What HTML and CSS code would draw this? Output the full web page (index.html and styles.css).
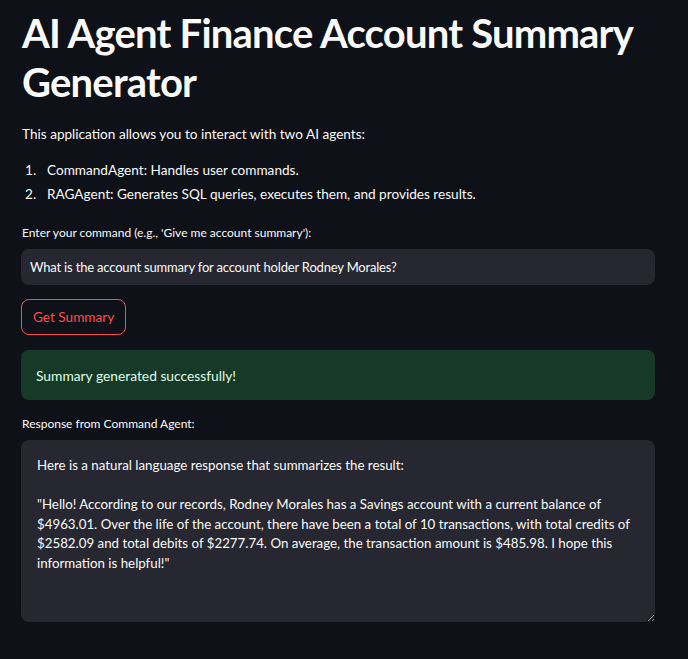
FILE: index.html
```html
<!DOCTYPE html>
<html lang="en">
<head>
<meta charset="utf-8">
<title>AI Agent Finance Account Summary Generator</title>
<link rel="stylesheet" href="styles.css">
</head>
<body>
<main class="app">
  <h1 class="title">AI Agent Finance Account Summary Generator</h1>
  <p class="intro">This application allows you to interact with two AI agents:</p>
  <ol class="agents">
    <li>CommandAgent: Handles user commands.</li>
    <li>RAGAgent: Generates SQL queries, executes them, and provides results.</li>
  </ol>
  <label class="field-label" for="cmd">Enter your command (e.g., 'Give me account summary'):</label>
  <input id="cmd" class="field-input" type="text" value="What is the account summary for account holder Rodney Morales?">
  <div class="btn-row"><button class="btn" type="button">Get Summary</button></div>
  <div class="alert">Summary generated successfully!</div>
  <label class="field-label field-label-resp" for="resp">Response from Command Agent:</label>
  <textarea id="resp" class="field-area" wrap="off">Here is a natural language response that summarizes the result:

"Hello! According to our records, Rodney Morales has a Savings account with a current balance of
$4963.01. Over the life of the account, there have been a total of 10 transactions, with total credits of
$2582.09 and total debits of $2277.74. On average, the transaction amount is $485.98. I hope this
information is helpful!"</textarea>
</main>
</body>
</html>
```

FILE: styles.css
```css
html, body {
  margin: 0;
  padding: 0;
  background: #0e1117;
}

body {
  color: #fafafa;
  font-family: "Lato", "Noto Sans", sans-serif;
  font-size: 13.6px;
}

.app {
  display: flex;
  flex-direction: column;
  padding: 9px 33px 0 21px;
}

.title {
  margin: 0;
  font-size: 40px;
  line-height: 49px;
  font-weight: 700;
  letter-spacing: -0.8px;
  padding-left: 1px;
}

.intro {
  margin: 17px 0 0 1px;
  line-height: 20px;
}

.agents {
  list-style: none;
  counter-reset: n;
  margin: 16px 0 0 0;
  padding-left: 4px;
  line-height: 20px;
}

.agents li {
  counter-increment: n;
  margin-bottom: 4px;
}

.agents li::before {
  content: counter(n) ".";
  display: inline-block;
  width: 22px;
}

.field-label {
  display: block;
  margin-top: 17px;
  font-size: 12px;
  line-height: 16px;
  padding-left: 1px;
}

.field-label-resp {
  margin-top: 16px;
}

.field-input {
  margin-top: 8px;
  height: 36px;
  box-sizing: border-box;
  border: none;
  outline: none;
  border-radius: 8px;
  background: #262730;
  color: #fafafa;
  font-family: inherit;
  font-size: 13px;
  letter-spacing: -0.18px;
  padding: 0 9px;
}

.btn-row {
  display: flex;
  margin-top: 14px;
}

.btn {
  height: 36px;
  box-sizing: border-box;
  padding: 0 11px;
  border: 1px solid #ff4b4b;
  border-radius: 8px;
  background: transparent;
  color: #ff4b4b;
  font-family: inherit;
  font-size: 13.6px;
}

.alert {
  margin-top: 15px;
  height: 50px;
  display: flex;
  align-items: center;
  padding: 0 15px;
  border-radius: 8px;
  background: #173928;
  color: #dffde9;
  font-size: 13.8px;
}

.field-area {
  margin-top: 8px;
  height: 182px;
  box-sizing: border-box;
  padding: 16px 16px;
  border: none;
  outline: none;
  border-radius: 8px;
  background: #262730;
  color: #fafafa;
  font-family: inherit;
  font-size: 13.3px;
  line-height: 19.6px;
  overflow: hidden;
  resize: vertical;
}
```
